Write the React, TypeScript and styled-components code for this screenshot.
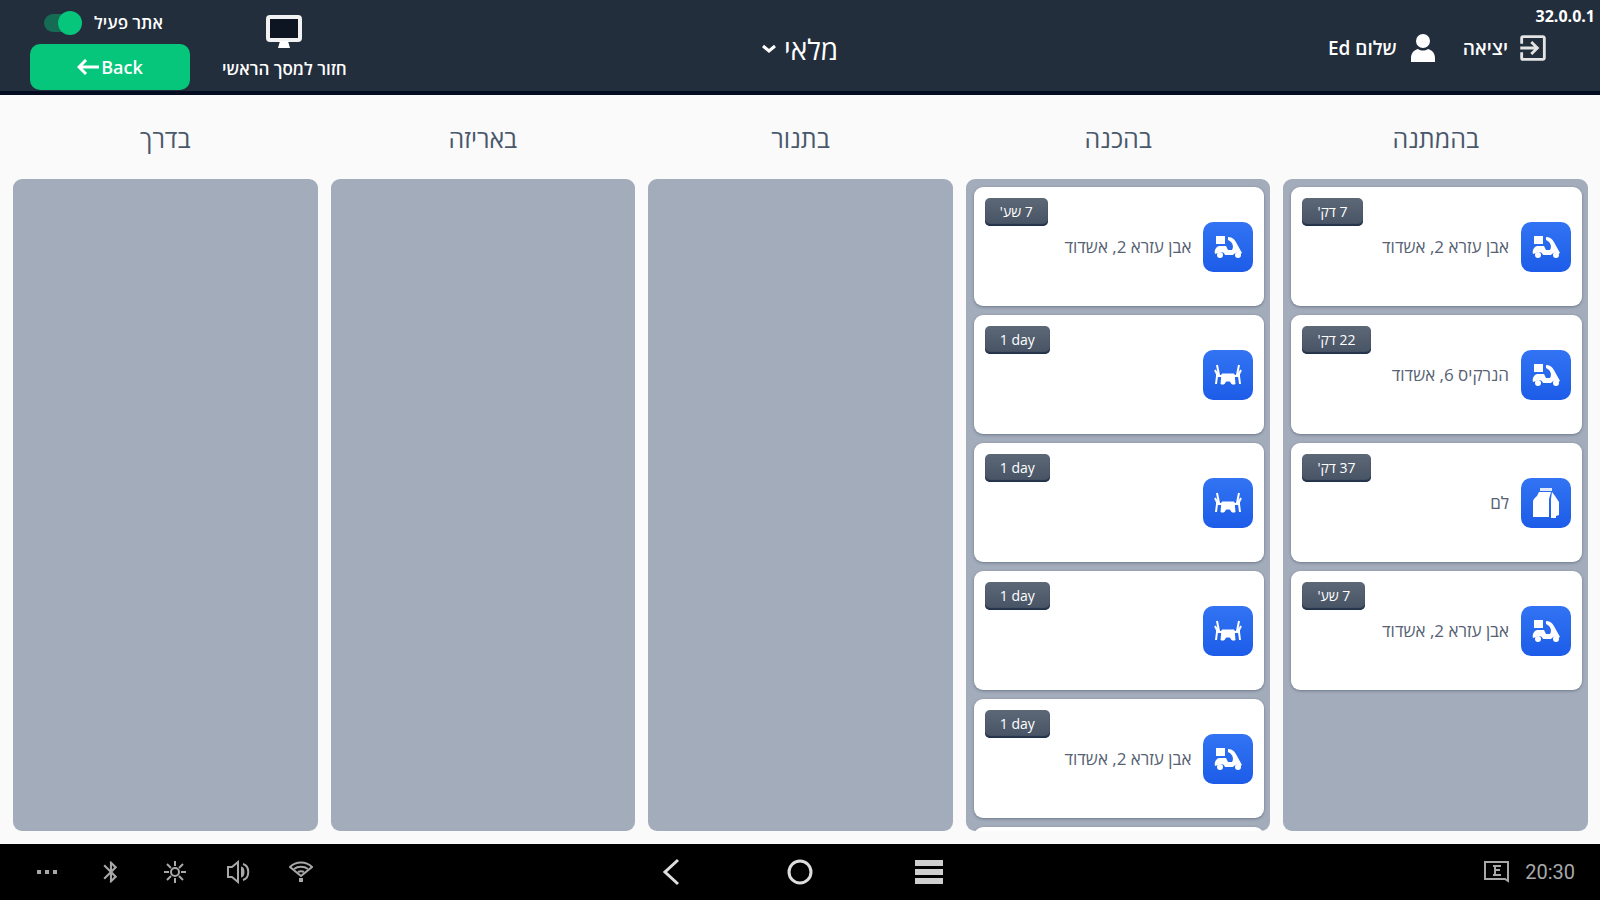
import React from "react";
import styled, { createGlobalStyle } from "styled-components";
import { MdExitToApp, MdBluetooth } from "react-icons/md";

const GlobalStyle = createGlobalStyle`
  *, *::before, *::after { box-sizing: border-box; }
  body {
    margin: 0;
    background: #fafafa;
    font-family: "Open Sans", "Noto Sans", "Liberation Sans", sans-serif;
  }
  button { font-family: inherit; border: 0; background: none; padding: 0; color: inherit; cursor: pointer; }
  svg { display: block; flex: none; }
`;

const Shell = styled.div`
  display: flex;
  flex-direction: column;
  height: 100vh;
  overflow: hidden;
`;

const Header = styled.header`
  display: grid;
  grid-template-columns: 1fr auto 1fr;
  background: #232e3c;
  color: #fff;
  border-bottom: 4px solid #030c20;
`;

const Account = styled.div`
  display: flex;
  flex-direction: column;
  gap: 2px;
`;

const Version = styled.span`
  padding: 4px 5px 0;
  font-size: 16px;
  line-height: 24px;
  font-weight: 700;
  direction: ltr;
  text-align: right;
`;

const AccountRow = styled.div`
  display: flex;
  gap: 28px;
  padding-inline-start: 50px;
`;

const AccountButton = styled.button<{ $gap: number }>`
  display: flex;
  align-items: center;
  gap: ${(p) => p.$gap}px;
  font-size: 19px;
  line-height: 36px;
  font-weight: 600;
`;

const SectionButton = styled.button`
  display: flex;
  align-items: center;
  gap: 8px;
  font-size: 28px;
  line-height: 36px;
  padding-top: 6px;
`;

const Tools = styled.div`
  display: flex;
  justify-content: flex-end;
  align-items: flex-end;
  gap: 32px;
  padding-inline-end: 30px;
`;

const HomeLink = styled.a`
  display: flex;
  flex-direction: column;
  align-items: center;
  gap: 8px;
  padding-bottom: 10px;
  font-size: 17px;
  line-height: 24px;
  font-weight: 600;
  color: #fff;
  text-decoration: none;
`;

const SiteBox = styled.div`
  display: flex;
  flex-direction: column;
  width: 160px;
  gap: 8px;
  padding-top: 10px;
  padding-bottom: 1px;
`;

const SwitchLabel = styled.label`
  display: flex;
  align-items: center;
  justify-content: flex-end;
  gap: 12px;
  padding-inline-end: 14px;
  font-size: 17px;
  line-height: 26px;
  font-weight: 600;
`;

const Switch = styled.input`
  appearance: none;
  display: flex;
  align-items: center;
  justify-content: flex-end;
  direction: ltr;
  width: 38px;
  height: 18px;
  margin: 0;
  border-radius: 9px;
  background: #156b54;
  &::before {
    content: "";
    flex: none;
    width: 24px;
    height: 24px;
    border-radius: 50%;
    background: #06c67b;
  }
`;

const BackButton = styled.button`
  display: flex;
  align-items: center;
  justify-content: center;
  gap: 2px;
  height: 46px;
  border-radius: 10px;
  background: #06c67b;
  font-size: 18px;
  font-weight: 600;
`;

const Board = styled.main`
  flex: 1;
  min-height: 0;
  display: grid;
  grid-template-columns: repeat(5, 1fr);
  gap: 13px;
  padding: 0 12px 13px 13px;
`;

const Column = styled.section`
  display: flex;
  flex-direction: column;
  min-width: 0;
  min-height: 0;
`;

const ColumnTitle = styled.h2`
  margin: 0;
  padding: 25px 0 23px;
  font-size: 25px;
  line-height: 36px;
  font-weight: 400;
  color: #4a586c;
  text-align: center;
`;

const Lane = styled.ul`
  flex: 1;
  min-height: 0;
  display: flex;
  flex-direction: column;
  gap: 9px;
  margin: 0;
  padding: 8px 6px 8px 8px;
  list-style: none;
  overflow: hidden;
  border-radius: 9px;
  background: #a3acbb;
`;

const Card = styled.li`
  flex: none;
  display: grid;
  grid-template-columns: 50px 1fr;
  grid-template-rows: 24px 50px 24px;
  column-gap: 12px;
  height: 119px;
  padding: 11px 11px 10px;
  border-radius: 9px;
  background: #fff;
  box-shadow: 0 1px 3px #6d7888;
`;

const Badge = styled.span`
  grid-area: 1 / 1 / 2 / 3;
  justify-self: end;
  height: 28px;
  padding: 0 15px;
  border-radius: 5px;
  background: linear-gradient(#5d6877, #465364);
  box-shadow: inset 0 -2px 1px #24334c;
  color: #fff;
  font-size: 14px;
  line-height: 28px;
`;

const KindTile = styled.span`
  grid-area: 2 / 1 / 3 / 2;
  display: flex;
  align-items: center;
  justify-content: center;
  width: 50px;
  height: 50px;
  border-radius: 10px;
  background: linear-gradient(#3274f3, #1c5ce8);
`;

const Address = styled.span`
  grid-area: 2 / 2 / 3 / 3;
  align-self: center;
  font-size: 17px;
  line-height: 24px;
  color: #566273;
`;

const SystemBar = styled.footer`
  display: grid;
  grid-template-columns: 1fr auto 1fr;
  align-items: center;
  direction: ltr;
  height: 56px;
  background: #000;
  color: #a8a8a8;
`;

const QuickSettings = styled.div`
  display: flex;
  align-items: center;
  gap: 39px;
  padding-left: 35px;
`;

const NavKeys = styled.nav`
  display: flex;
  align-items: center;
  gap: 101px;
  color: #dedede;
`;

const Status = styled.div`
  display: flex;
  align-items: center;
  justify-content: flex-end;
  gap: 15px;
  padding-right: 25px;
  font-family: Roboto, sans-serif;
  font-size: 20px;
  line-height: 28px;
`;

const ScooterIcon = () => (
  <svg width="30" height="24" viewBox="0 0 30 24" fill="#fff">
    <path d="M3 1h9v8H3z" />
    <path d="M15 2c5 0 7 3 9 7l5 9-2 1c-2-2-4-2-6 0l-1 1h-8c-1-3-4-4-7-2l-3 1c-1-4 1-7 4-8h7l2 4h4c2-3 1-8-4-10z" />
    <circle cx="7" cy="20" r="3" />
    <circle cx="25" cy="20" r="3" />
  </svg>
);

const TableIcon = () => (
  <svg width="30" height="24" viewBox="0 0 30 24" fill="none" stroke="#fff">
    <path d="M4 2l2 10H3M2 7l3 6h4v7M4 13L3 21M26 2l-2 10h3M28 7l-3 6h-4v7M26 13l1 8" strokeWidth="2" />
    <path d="M9 11h12l1 10h-3l-2-3h-4l-2 3H8z" fill="#fff" strokeWidth="1" />
  </svg>
);

const BagIcon = () => (
  <svg width="28" height="30" viewBox="0 0 28 30" fill="#fff">
    <path d="M8 0h12v3H8z" opacity=".85" />
    <path d="M7 4h12l-2 7v18H1V14c0-3 2-4 4-6z" />
    <path d="M20 4l3 4 4 6v13l-3 1v2h-5V11z" />
  </svg>
);

const kinds = { delivery: ScooterIcon, table: TableIcon, pickup: BagIcon };
const kindNames = { delivery: "משלוח", table: "שולחן", pickup: "איסוף" };

type Order = { kind: keyof typeof kinds; time?: string; address?: string };

const columns: { title: string; orders: Order[] }[] = [
  {
    title: "בהמתנה",
    orders: [
      { kind: "delivery", time: "7 דק'", address: "אבן עזרא 2, אשדוד" },
      { kind: "delivery", time: "22 דק'", address: "הנרקיס 6, אשדוד" },
      { kind: "pickup", time: "37 דק'", address: "לם" },
      { kind: "delivery", time: "7 שע'", address: "אבן עזרא 2, אשדוד" },
    ],
  },
  {
    title: "בהכנה",
    orders: [
      { kind: "delivery", time: "7 שע'", address: "אבן עזרא 2, אשדוד" },
      { kind: "table", time: "1 day" },
      { kind: "table", time: "1 day" },
      { kind: "table", time: "1 day" },
      { kind: "delivery", time: "1 day", address: "אבן עזרא 2, אשדוד" },
      { kind: "table" },
    ],
  },
  { title: "בתנור", orders: [] },
  { title: "באריזה", orders: [] },
  { title: "בדרך", orders: [] },
];

const OrderCard = ({ kind, time, address }: Order) => {
  const Icon = kinds[kind];
  return (
    <Card>
      {time && <Badge dir={time.endsWith("day") ? "ltr" : "rtl"}>{time}</Badge>}
      <KindTile role="img" aria-label={kindNames[kind]}>
        <Icon />
      </KindTile>
      {address && <Address>{address}</Address>}
    </Card>
  );
};

export default function App() {
  return (
    <Shell dir="rtl" lang="he">
      <GlobalStyle />
      <Header>
        <Account>
          <Version>32.0.0.1</Version>
          <AccountRow>
            <AccountButton type="button" $gap={8}>
              <MdExitToApp size={34} color="#e4e4e4" />
              יציאה
            </AccountButton>
            <AccountButton type="button" $gap={14}>
              <svg width="24" height="28" viewBox="0 0 24 28" fill="#fff">
                <circle cx="12" cy="7" r="7" />
                <path d="M0 28v-4c0-5 3-8 7-9 3 2 7 2 10 0 4 1 7 4 7 9v4z" />
              </svg>
              שלום Ed
            </AccountButton>
          </AccountRow>
        </Account>
        <SectionButton type="button">
          מלאי
          <svg width="14" height="10" viewBox="0 0 14 10" fill="none" stroke="#fff" strokeWidth="3">
            <path d="M1 2l6 5 6-5" />
          </svg>
        </SectionButton>
        <Tools>
          <HomeLink href="#home">
            <svg width="36" height="34" viewBox="0 0 36 34">
              <rect x="2" y="2" width="32" height="23" rx="2" fill="#0d1523" stroke="#f2f2f2" strokeWidth="4" />
              <path d="M14 26h8l2 7H12z" fill="#fff" />
            </svg>
            חזור למסך הראשי
          </HomeLink>
          <SiteBox>
            <SwitchLabel>
              אתר פעיל
              <Switch type="checkbox" role="switch" defaultChecked />
            </SwitchLabel>
            <BackButton type="button">
              Back
              <svg width="22" height="16" viewBox="0 0 22 16" fill="none" stroke="#fff" strokeWidth="3">
                <path d="M22 8H2M9 1L2 8l7 7" />
              </svg>
            </BackButton>
          </SiteBox>
        </Tools>
      </Header>

      <Board>
        {columns.map((column) => (
          <Column key={column.title}>
            <ColumnTitle>{column.title}</ColumnTitle>
            <Lane>
              {column.orders.map((order, i) => (
                <OrderCard key={i} {...order} />
              ))}
            </Lane>
          </Column>
        ))}
      </Board>

      <SystemBar>
        <QuickSettings>
          <button type="button" aria-label="עוד">
            <svg width="24" height="24" fill="currentColor">
              <path d="M2 10h4v4H2zM10 10h4v4h-4zM18 10h4v4h-4z" />
            </svg>
          </button>
          <button type="button" aria-label="Bluetooth">
            <MdBluetooth size={26} />
          </button>
          <button type="button" aria-label="בהירות">
            <svg width="24" height="24" fill="none" stroke="currentColor" strokeWidth="2">
              <circle cx="12" cy="12" r="4" />
              <path d="M12 1v5M12 18v5M1 12h5M18 12h5M4 4l4 4M16 16l4 4M4 20l4-4M16 8l4-4" />
            </svg>
          </button>
          <button type="button" aria-label="עוצמת קול">
            <svg width="24" height="24" fill="none" stroke="currentColor" strokeWidth="2">
              <path d="M2 7h4l6-5v20l-6-5H2z" />
              <path d="M16 8v8c2-1 2-7 0-8zM17 4c7 2 7 14 0 16" />
            </svg>
          </button>
          <button type="button" aria-label="Wi-Fi">
            <svg width="24" height="24" fill="none" stroke="currentColor" strokeWidth="2">
              <path d="M1 7c6-6 16-6 22 0L12 16z" />
              <path d="M5 9c4-3 10-3 14 0M9 12c2-1 4-1 6 0" />
              <path d="M10 20h4" strokeWidth="4" />
            </svg>
          </button>
        </QuickSettings>
        <NavKeys>
          <button type="button" aria-label="חזרה">
            <svg width="28" height="28" fill="none" stroke="currentColor" strokeWidth="3">
              <path d="M21 2L8 14l13 12" />
            </svg>
          </button>
          <button type="button" aria-label="בית">
            <svg width="28" height="28" fill="none" stroke="currentColor" strokeWidth="3">
              <circle cx="14" cy="14" r="11" />
            </svg>
          </button>
          <button type="button" aria-label="יישומים">
            <svg width="28" height="28" fill="none" stroke="#cfcfcf" strokeWidth="6">
              <path d="M0 5h28M0 14h28M0 23h28" />
            </svg>
          </button>
        </NavKeys>
        <Status>
          <svg width="26" height="22" viewBox="0 0 26 22" fill="none" stroke="currentColor" strokeWidth="2">
            <path d="M1 1h23v19l-3-2H1z" />
            <path d="M9 5h8M9 14h8M11 5v9M11 9h5" />
          </svg>
          <time>20:30</time>
        </Status>
      </SystemBar>
    </Shell>
  );
}
